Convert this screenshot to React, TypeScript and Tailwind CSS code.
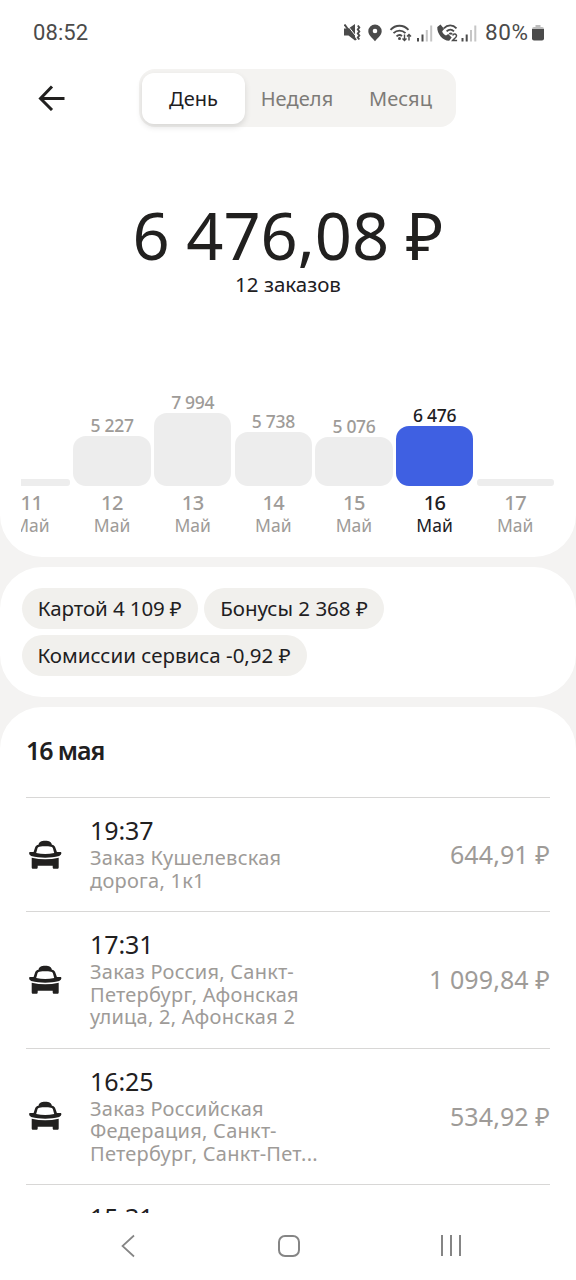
import clsx from "clsx";

type Day = { day: string; value?: string; height: number; active?: boolean };

const TABS = [
  { label: "День", className: "w-[103px] rounded-xl bg-white text-[#21201f] shadow-[0_3px_6px_rgba(0,0,0,0.12)]" },
  { label: "Неделя", className: "w-[104px] text-[#7d7b78] tracking-[0.1px]" },
  { label: "Месяц", className: "w-[103px] text-[#7d7b78] tracking-[0.1px]" },
];

const DAYS: Day[] = [
  { day: "11", height: 7 },
  { day: "12", value: "5 227", height: 50 },
  { day: "13", value: "7 994", height: 73 },
  { day: "14", value: "5 738", height: 54 },
  { day: "15", value: "5 076", height: 49 },
  { day: "16", value: "6 476", height: 60, active: true },
  { day: "17", height: 7 },
];

const CHIPS = [
  { label: "Картой 4 109 ₽", className: "w-[176.5px] tracking-[-0.1px]" },
  { label: "Бонусы 2 368 ₽", className: "w-[180px] tracking-[0px]" },
  { label: "Комиссии сервиса -0,92 ₽", className: "w-[285px] tracking-[0px]" },
];

const ORDERS = [
  { time: "19:37", lines: ["Заказ Кушелевская", "дорога, 1к1"], amount: "644,91 ₽", height: "h-[114px]" },
  { time: "17:31", lines: ["Заказ Россия, Санкт-", "Петербург, Афонская", "улица, 2, Афонская 2"], amount: "1 099,84 ₽", height: "h-[136.5px]" },
  { time: "16:25", lines: ["Заказ Российская", "Федерация, Санкт-", "Петербург, Санкт-Пет..."], amount: "534,92 ₽", height: "h-[136.5px]" },
  { time: "15:31", lines: [], amount: "", height: "h-[136.5px]" },
];

export default function App() {
  return (
    <div className="flex h-[1280px] w-[576px] flex-col overflow-hidden bg-white font-['Noto_Sans','Open_Sans',sans-serif] text-[#21201f]">
      <main className="flex h-[1213px] shrink-0 flex-col gap-[10px] overflow-hidden bg-[#f4f3f2]">
        <section className="flex h-[557px] shrink-0 flex-col rounded-b-[42px] bg-white">
          <StatusBar />
          <Header />
          <div className="mt-[62px] flex flex-col items-center">
            <h1 className="text-[65px] leading-[84px] tracking-[-0.1px] whitespace-nowrap">6 476,08 ₽</h1>
            <p className="-mt-[7px] text-[20.5px] leading-7">12 заказов</p>
          </div>
          <Chart />
        </section>

        <section className="flex h-[130px] shrink-0 flex-wrap content-start gap-x-[6px] gap-y-[6px] rounded-[42px] bg-white pt-[21px] pl-[21.5px]">
          {CHIPS.map((chip) => (
            <span
              key={chip.label}
              className={clsx("flex h-[41px] items-center justify-center rounded-full bg-[#f1f0ed] text-[20.5px] whitespace-nowrap", chip.className)}
            >
              {chip.label}
            </span>
          ))}
        </section>

        <section className="shrink-0 rounded-t-[42px] bg-white px-[26px]">
          <h2 className="flex h-[90px] items-center pb-[2px] text-[25px] font-semibold tracking-[-1.1px]">16 мая</h2>
          {ORDERS.map((order) => (
            <Order key={order.time} {...order} />
          ))}
        </section>
      </main>
      <NavBar />
    </div>
  );
}

function StatusBar() {
  return (
    <div className="flex h-[65px] items-center justify-between pr-[32px] pl-[33px] text-[#4b4b4b]">
      <span className="font-[Roboto,sans-serif] text-[22px] tracking-[0.1px]">08:52</span>
      <div className="flex items-center">
        <svg width="136" height="24" viewBox="0 0 136 24" fill="none" stroke="currentColor">
          {/* muted + vibrate */}
          <path d="M0 7.500h4.500l6.500-4.500v16.500l-6.500-5H0z" fill="currentColor" stroke="none" />
          <path d="M2 2.500l11 14" stroke="#fff" strokeWidth="1" />
          <path d="M.5 3.500l11.500 15.500" strokeWidth="2" />
          <path d="M13.800 4.500l1.500 2-1.500 2 1.500 2-1.500 2 1.500 2-1.500 2 1.500 2" strokeWidth="1.900" />
          {/* location */}
          <path fillRule="evenodd" d="M31 3.500a6.700 6.700 0 0 0-6.700 6.700c0 4.300 4.700 7 6.700 10 2-3 6.700-5.700 6.700-10a6.700 6.700 0 0 0-6.700-6.700zm0 4.200a2.300 2.300 0 1 1 0 4.600 2.300 2.300 0 0 1 0-4.600z" fill="currentColor" stroke="none" />
          {/* wifi */}
          <path d="M46.500 8.800c5-5.500 13-5.500 18 0M49.500 12.200c3.500-3.500 8.500-3.500 12 0M52.500 15.400c1.800-1.600 4-1.600 5.500-.3" strokeWidth="1.900" />
          <circle cx="55.500" cy="17.500" r="1.500" fill="currentColor" stroke="none" />
          <path d="M60.500 13.500v6M58.500 17.500l2 2 2-2M65 19.500v-6M63 15.500l2-2 2 2" strokeWidth="1.400" />
          {/* signal 1 */}
          <path d="M74 17v3.500M78.500 13.500v7" strokeWidth="2" />
          <path d="M82.800 9v11.500M87.200 4.500v16" strokeWidth="2" stroke="#c6c6c6" />
          {/* wifi calling */}
          <path d="M93.300 6l3.200-2.500 3.700 4.500-2 2.200c.5 2 1.800 3.300 3.800 4.300l2.200-1.500 3.500 3.500-2.500 3.300c-6.200.2-12.400-7-11.900-13.800z" fill="currentColor" stroke="none" />
          <path d="M99.800 7.300c3.700-3.800 9.200-3.800 12.700 0M102.600 10.400c2.200-2.200 5.200-2.200 7.400 0M105.300 13c.9-.7 1.900-.7 2.800 0" strokeWidth="1.800" />
          <path d="M108.700 14.500c.5-2.200 4.100-1.800 3.800.5-.2 1.400-2.600 2.900-3.900 4.500h4.500" strokeWidth="1.500" />
          {/* signal 2 */}
          <path d="M118.500 17v3.500M122.700 13.500v7" strokeWidth="2" />
          <path d="M127 9v11.500M131.300 4.500v16" strokeWidth="2" stroke="#c6c6c6" />
        </svg>
        <span className="ml-[5px] w-[46px] font-[Roboto,sans-serif] text-[22.5px] tracking-[0.6px] whitespace-nowrap">80%</span>
        <svg className="ml-[1px]" width="12" height="16" viewBox="0 0 12 16">
          <path d="M3.500 0h5v2H10a2 2 0 0 1 2 2v1H0V4a2 2 0 0 1 2-2h1.500z" fill="#bdbdbd" />
          <path d="M0 4h12v9.500a2 2 0 0 1-2 2H2a2 2 0 0 1-2-2z" fill="currentColor" />
        </svg>
      </div>
    </div>
  );
}

function Header() {
  return (
    <header className="flex h-[66px] items-center pl-[38px]">
      <svg width="28" height="26" viewBox="0 0 28 26" fill="none" stroke="currentColor" strokeWidth="3">
        <path d="M26.500 13.500H3M14 1.500L2.500 13.500 14 25" />
      </svg>
      <div className="ml-[73px] flex h-[58px] w-[317px] items-center rounded-2xl bg-[#f4f3f1] pl-[3px]">
        {TABS.map((tab) => (
          <button key={tab.label} className={clsx("flex h-[51px] items-center justify-center pt-[2px] text-[20px]", tab.className)}>
            {tab.label}
          </button>
        ))}
      </div>
    </header>
  );
}

function Chart() {
  return (
    <div className="mt-auto mr-[22px] mb-[16px] ml-[21px] flex items-end justify-end gap-[3.150px] overflow-hidden pb-[6px]">
      {DAYS.map(({ day, value, height, active }) => (
        <div key={day} className={clsx("flex w-[77.500px] shrink-0 flex-col items-center", active ? "text-[#21201f]" : "text-[#9e9b98]")}>
          <span className="h-[22px] text-[17.500px] leading-[22px] font-medium tracking-[-0.300px]">{value}</span>
          <div
            className={clsx("w-full", value ? "rounded-[13px]" : "rounded-[3px]", active ? "bg-[#3f60e2]" : "bg-[#ededed]")}
            style={{ height }}
          />
          <span className="mt-[5px] text-[20px] leading-6 font-medium tracking-[-0.500px]">{day}</span>
          <span className="text-[17.500px] leading-5">Май</span>
        </div>
      ))}
    </div>
  );
}

function Order({ time, lines, amount, height }: { time: string; lines: string[]; amount: string; height: string }) {
  return (
    <article className={clsx("flex items-center border-t border-[#d8d7d6]", height)}>
      <TaxiIcon />
      <div className="ml-[27px] flex-1 self-start pt-4">
        <div className="text-[25px] leading-8 tracking-[-0.100px]">{time}</div>
        <div className="pt-px text-[20px] leading-[22.500px] tracking-[0.250px] whitespace-nowrap text-[#9e9b98]">
          {lines.map((line) => (
            <div key={line}>{line}</div>
          ))}
        </div>
      </div>
      <div className="text-[25px] tracking-[0.100px] whitespace-nowrap text-[#9e9b98]">{amount}</div>
    </article>
  );
}

function TaxiIcon() {
  return (
    <svg className="ml-[3px] shrink-0" width="34" height="30" viewBox="0 0 34 30" fill="#21201f">
      <path
        fillRule="evenodd"
        d="M9.500 4.800C10 2 12 .7 16.200.7s6.200 1.300 6.700 4.100c1.900.3 2.900 1.200 3.500 3l1.500 4.300 3-.2c1-.1 1.500.4 1.500 1.200 0 1.200-.8 2.300-2.200 2.800-9 2.300-19 2.300-28 0C.8 15.400.1 14.300.1 13.100c0-.8.5-1.300 1.500-1.200l3 .2L6 7.800c.6-1.800 1.600-2.700 3.500-3zM10.400 6.800c-1 .1-1.600.6-1.900 1.500l-1.300 4.600c6 1.500 12 1.500 18 0l-1.300-4.600c-.3-.9-.9-1.400-1.900-1.500-4-.6-7.600-.6-11.600 0z"
      />
      <path d="M2.700 17.800c9 2 18 2 27 0v9.400c0 1-.5 1.500-1.500 1.500h-3c-1 0-1.500-.5-1.500-1.500v-1.500H8.700v1.500c0 1-.5 1.500-1.500 1.500h-3c-1 0-1.500-.5-1.500-1.500z" />
    </svg>
  );
}

function NavBar() {
  return (
    <nav className="flex flex-1 items-center pb-[2px] pl-[120px] text-[#858585]">
      <svg width="16" height="24" viewBox="0 0 16 24" fill="none" stroke="currentColor" strokeWidth="1.700">
        <path d="M14 1.500L2.500 12 14 22.500" />
      </svg>
      <div className="ml-[142px] size-[22px] rounded-[7px] border-2 border-current" />
      <div className="ml-[141px] flex h-[21px] w-[20px] justify-between">
        <i className="w-[2px] bg-current" />
        <i className="w-[2px] bg-current" />
        <i className="w-[2px] bg-current" />
      </div>
    </nav>
  );
}
